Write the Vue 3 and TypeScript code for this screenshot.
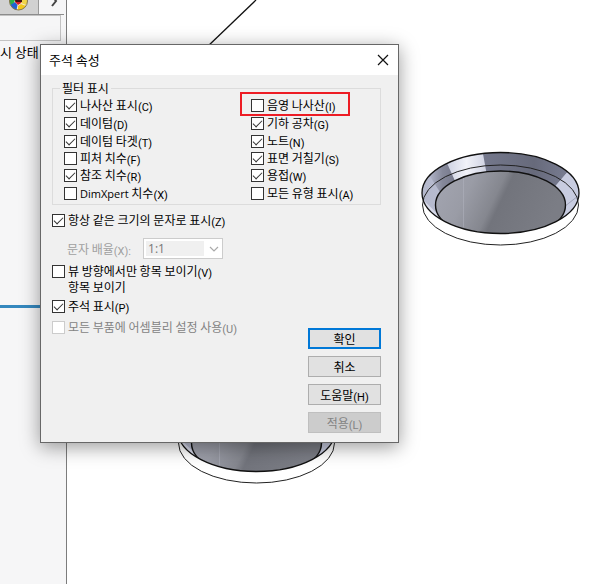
<script setup lang="ts">
import { ref } from 'vue'

interface Option {
  label: string
  key: string
  latin?: string
  checked: boolean
  marked?: boolean
}

const filters = ref<Option[]>([
  { label: '나사산 표시', key: 'C', checked: true },
  { label: '데이텀', key: 'D', checked: true },
  { label: '데이텀 타겟', key: 'T', checked: true },
  { label: '피처 치수', key: 'F', checked: false },
  { label: '참조 치수', key: 'R', checked: true },
  { latin: 'DimXpert', label: ' 치수', key: 'X', checked: false },
  { label: '음영 나사산', key: 'I', checked: false, marked: true },
  { label: '기하 공차', key: 'G', checked: true },
  { label: '노트', key: 'N', checked: true },
  { label: '표면 거칠기', key: 'S', checked: true },
  { label: '용접', key: 'W', checked: true },
  { label: '모든 유형 표시', key: 'A', checked: false },
])

const fixedSize = ref(true)
const viewOnly = ref(false)
const showNotes = ref(true)
const assembly = ref(false)

const discs = [
  { id: 'right', x: 500.5, y: 193 },
  { id: 'lower', x: 256.5, y: 431 },
]
</script>

<template>
  <div class="app">
    <aside class="panel">
      <div class="tabs">
        <button class="tab" type="button" aria-label="DisplayManager">
          <svg width="20" height="12" viewBox="0 0 20 12">
            <circle cx="10.500" cy="1" r="9" fill="#f5ecd0" />
            <path d="M1.500 0H7L5 5L2.500 5Q1.500 3 1.500 0Z" fill="#27b34a" />
            <path d="M2.500 5L7 2L9.500 5L8.500 10Q4 9 2.500 5Z" fill="#1f62d6" />
            <path d="M10 6L13 4L18 6Q15 10 10 10Z" fill="#f2c81c" />
            <path d="M14 0H19.500Q19.500 3 18 5L13 3Z" fill="#f0d548" />
            <path d="M7 0H14L13 3L10 5L7 2Z" fill="#d3202a" />
            <path d="M7 0H14V2H8Z" fill="#3d1216" />
            <circle cx="10.500" cy="1" r="9" fill="none" stroke="#84764c" />
          </svg>
        </button>
        <button class="more" type="button" aria-label="more">
          <svg width="10" height="8" viewBox="0 0 10 8">
            <path d="M1 -4L5 1L1 6" fill="none" stroke="#444" stroke-width="2" />
          </svg>
        </button>
      </div>
      <div class="slot"></div>
      <p class="state">시 상태</p>
      <div class="splitter"></div>
    </aside>

    <main class="canvas">
      <svg class="model" width="599" height="584" viewBox="0 0 599 584">
        <defs>
          <linearGradient id="floor" x1="0" y1="0" x2="1" y2="0.250">
            <stop offset="0" stop-color="#a4a6b2" />
            <stop offset="0.300" stop-color="#9a9ca6" />
            <stop offset="0.520" stop-color="#85878f" />
            <stop offset="0.580" stop-color="#72747c" />
            <stop offset="1" stop-color="#7b7d85" />
          </linearGradient>
          <linearGradient id="wall" x1="0" y1="0" x2="1" y2="0">
            <stop offset="0" stop-color="#b4b8cc" />
            <stop offset="1" stop-color="#d4d8ea" />
          </linearGradient>
          <linearGradient id="shade" x1="0" y1="0" x2="1" y2="0">
            <stop offset="0" stop-color="#b4b8cc" />
            <stop offset="0.500" stop-color="#85889a" />
            <stop offset="1" stop-color="#74778a" />
          </linearGradient>
          <linearGradient id="shine" x1="0" y1="0" x2="1" y2="0">
            <stop offset="0" stop-color="#cdd1e2" />
            <stop offset="0.500" stop-color="#f1f2f8" />
            <stop offset="1" stop-color="#cfd2e2" />
          </linearGradient>
          <linearGradient id="back" x1="0" y1="0" x2="1" y2="0">
            <stop offset="0" stop-color="#74788c" />
            <stop offset="0.600" stop-color="#676a7b" />
            <stop offset="1" stop-color="#797d92" />
          </linearGradient>
          <clipPath id="rim"><ellipse rx="78.500" ry="40.500" /></clipPath>
        </defs>
        <path d="M256 0L206 48" stroke="#111" stroke-width="1.300" />
        <g v-for="d in discs" :key="d.id" :transform="`translate(${d.x} ${d.y})`">
          <ellipse cy="12" rx="78" ry="40" fill="#fff" stroke="#222" />
          <g clip-path="url(#rim)">
            <ellipse rx="79" ry="41" fill="url(#wall)" />
            <path d="M-79 5L-60 24L-50 34H-79Z" fill="#d6d9e8" />
            <path d="M-72 -19L-53 -31L-44 -12L-60 0Z" fill="url(#shade)" />
            <path d="M-54 -31L-40 -42L-17 -42L-14 -20L-45 -11Z" fill="url(#shine)" />
            <path d="M-18 -42L64 -42L68 -22L55 -7L10 -20L-14 -20Z" fill="url(#back)" />
            <path d="M67 -21L55 -7L65 12L58 28L82 18V-20Z" fill="#c8cce0" />
            <path d="M66 12L80 1" stroke="#8e92a6" stroke-width="0.700" />
            <ellipse cy="12" rx="65" ry="34" fill="url(#floor)" stroke="#111" stroke-width="1.400" />
            <path d="M-37 -15V34" stroke="#b3b5c0" stroke-width="0.500" />
            <path d="M-78 12A78 40 0 0 1 78 12" fill="none" stroke="#222" />
          </g>
          <ellipse rx="78.500" ry="40.500" fill="none" stroke="#111" stroke-width="1.300" />
        </g>
      </svg>
    </main>

    <form class="dialog" role="dialog" aria-labelledby="dialog-title" @submit.prevent>
      <header class="title">
        <h1 id="dialog-title">주석 속성</h1>
        <button class="close" type="button" aria-label="닫기">
          <svg width="12" height="12" viewBox="0 0 12 12">
            <path d="M1 1L11 11M11 1L1 11" stroke="#111" stroke-width="1.200" />
          </svg>
        </button>
      </header>

      <div class="body">
        <fieldset class="filters">
          <legend>필터 표시</legend>
          <div class="grid">
            <label v-for="f in filters" :key="f.key" class="check" :class="{ marked: f.marked }">
              <input v-model="f.checked" type="checkbox" />
              <span><span v-if="f.latin" class="latin">{{ f.latin }}</span>{{ f.label }}<span class="key">({{ f.key }})</span></span>
            </label>
          </div>
        </fieldset>

        <label class="check size">
          <input v-model="fixedSize" type="checkbox" />
          <span>항상 같은 크기의 문자로 표시<span class="key">(Z)</span></span>
        </label>

        <div class="scale">
          <label for="scale">문자 배율<span class="key">(X):</span></label>
          <div class="combo">
            <select id="scale" disabled>
              <option>1:1</option>
            </select>
            <svg width="10" height="6" viewBox="0 0 10 6">
              <path d="M1 1L5 5L9 1" fill="none" stroke="#aaa" stroke-width="1.200" />
            </svg>
          </div>
        </div>

        <label class="check">
          <input v-model="viewOnly" type="checkbox" />
          <span>뷰 방향에서만 항목 보이기<span class="key">(V)</span><br />항목 보이기</span>
        </label>
        <label class="check notes">
          <input v-model="showNotes" type="checkbox" />
          <span>주석 표시<span class="key">(P)</span></span>
        </label>
        <label class="check off">
          <input v-model="assembly" type="checkbox" disabled />
          <span>모든 부품에 어셈블리 설정 사용<span class="key">(U)</span></span>
        </label>

        <div class="actions">
          <button class="btn primary" type="submit">확인</button>
          <button class="btn" type="button">취소</button>
          <button class="btn" type="button">도움말<span class="key">(H)</span></button>
          <button class="btn" type="button" disabled>적용<span class="key">(L)</span></button>
        </div>
      </div>
    </form>
  </div>
</template>

<style>
body {
  margin: 0;
}
</style>

<style scoped>
*,
*::after {
  box-sizing: border-box;
}
.app {
  position: relative;
  display: flex;
  min-height: 100vh;
  overflow: hidden;
  background: #fff;
  color: #000;
  font: 12px/16px 'Noto Sans CJK KR', sans-serif;
}
button,
select {
  font: inherit;
  color: inherit;
  margin: 0;
  padding: 0;
}
.panel {
  width: 67px;
  background: #f6f6f7;
  border-right: 1px solid #7c7c7c;
}
.tabs {
  display: flex;
  width: 64px;
  height: 15px;
  border-bottom: 1px solid #8c8c8c;
}
.tab {
  display: flex;
  width: 39px;
  padding-left: 8px;
  border: 0;
  border-right: 1px solid #999;
  background: #d1d1d1;
}
.more {
  display: flex;
  padding-left: 12px;
  border: 0;
  background: none;
}
.slot {
  width: 61px;
  height: 26px;
  border: 1px solid #c3c3c3;
  border-left: 0;
}
.state {
  margin: 3px 0 0;
  font-size: 13px;
  white-space: nowrap;
}
.splitter {
  height: 3px;
  margin-top: 245px;
  background: #3588be;
}
.canvas {
  flex: 1;
}
.model {
  position: absolute;
  left: 0;
  top: 0;
}
.dialog {
  position: absolute;
  left: 40px;
  top: 44px;
  width: 359px;
  border: 1px solid #676767;
  background: #f0f0f0;
  box-shadow: 0 4px 18px rgba(0, 0, 0, 0.4);
}
.title {
  display: flex;
  align-items: center;
  justify-content: space-between;
  height: 30px;
  padding: 0 9px 0 8px;
  background: #fff;
}
h1 {
  margin: 0;
  font-size: 13px;
  font-weight: 400;
}
.close {
  display: flex;
  border: 0;
  background: none;
}
.body {
  display: flex;
  flex-direction: column;
  align-items: flex-start;
  padding: 5px 17px 9px 11px;
}
.filters {
  align-self: stretch;
  margin: 0;
  padding: 1px 0 1px 11px;
  border: 1px solid #dcdcdc;
}
legend {
  margin-left: -4px;
  padding: 0 2px;
}
.grid {
  display: grid;
  grid-template-columns: 187px 1fr;
  grid-template-rows: 18px 18px 17px 17px 18px 18px;
  grid-auto-flow: column;
}
.check {
  position: relative;
  display: flex;
  align-items: flex-start;
  gap: 3px;
}
.check input {
  display: grid;
  flex: none;
  width: 13px;
  height: 13px;
  margin: 2px 0 0;
  appearance: none;
  border: 1px solid #333;
  background: #fff;
}
.check input:checked::after {
  content: '';
  width: 9px;
  height: 5px;
  margin: 2px 1px;
  border: solid #333;
  border-width: 0 0 1px 1px;
  transform: rotate(-45deg);
}
.check input:disabled {
  border-color: #ccc;
}
.key {
  position: relative;
  top: 1px;
  font-family: Roboto, sans-serif;
  font-size: 11px;
  line-height: 12px;
}
.latin {
  font-family: 'Open Sans', sans-serif;
  font-size: 11px;
  line-height: 12px;
}
.marked::after {
  content: '';
  position: absolute;
  left: -11px;
  top: -5px;
  width: 110px;
  height: 24px;
  border: 2px solid #ed1c24;
}
.size {
  margin-top: 7px;
}
.scale {
  display: flex;
  align-items: center;
  gap: 12px;
  margin: 10px 0 4px 15px;
  color: #a0a0a0;
}
.combo {
  position: relative;
  display: flex;
  width: 80px;
  height: 21px;
  padding: 2px 18px 2px 2px;
  border: 1px solid #ccc;
  background: #fff;
}
.combo select {
  width: 100%;
  padding-left: 2px;
  appearance: none;
  border: 0;
  border-radius: 0;
  background: #f0f0f0;
  color: #777;
  font-family: 'Open Sans', sans-serif;
  font-size: 12px;
  line-height: 14px;
  opacity: 1;
}
.combo svg {
  position: absolute;
  right: 3px;
  top: 7px;
}
.notes {
  margin-top: 3px;
}
.off {
  margin-top: 5px;
  color: #838383;
}
.actions {
  display: flex;
  flex-direction: column;
  gap: 7px;
  align-self: flex-end;
  margin-top: -7px;
}
.btn {
  width: 73px;
  height: 21px;
  border: 1px solid #adadad;
  background: #e1e1e1;
  line-height: 16px;
}
.primary {
  border: 2px solid #0078d7;
}
.btn:disabled {
  border-color: #bfbfbf;
  background: #ccc;
  color: #838383;
}
</style>
